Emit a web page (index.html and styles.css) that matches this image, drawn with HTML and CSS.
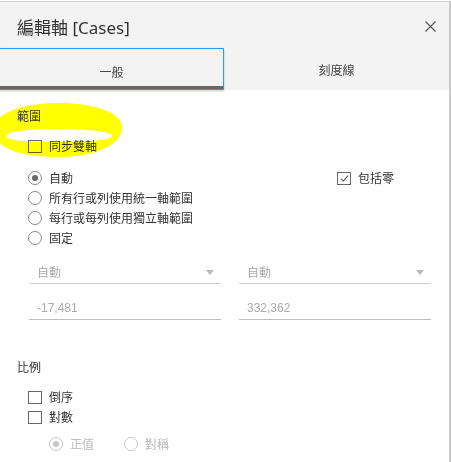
FILE: index.html
```html
<!DOCTYPE html>
<html lang="zh-Hant">
<head>
<meta charset="utf-8">
<title>編輯軸 [Cases]</title>
<link rel="stylesheet" href="styles.css">
</head>
<body>
<div class="dialog">
  <div class="header">
    <div class="titlebar">
      <span class="title">編輯軸 [Cases]</span>
      <svg class="close" width="11" height="11" viewBox="0 0 11 11"><path d="M0.5 0.5L10.5 10.5M10.5 0.5L0.5 10.5" stroke="#555" stroke-width="1.1" fill="none"/></svg>
    </div>
    <div class="tabs">
      <div class="tab active">一般</div>
      <div class="tab">刻度線</div>
    </div>
  </div>
  <div class="content">
    <div class="section-title">範圍</div>
    <label class="row sync"><span class="checkbox"></span><span>同步雙軸</span></label>
    <div class="range">
      <div class="radios">
        <label class="row"><span class="radio checked"></span><span>自動</span></label>
        <label class="row"><span class="radio"></span><span>所有行或列使用統一軸範圍</span></label>
        <label class="row"><span class="radio"></span><span>每行或每列使用獨立軸範圍</span></label>
        <label class="row"><span class="radio"></span><span>固定</span></label>
      </div>
      <label class="row"><span class="checkbox checked"><svg width="11" height="11" viewBox="0 0 11 11"><path d="M2 5.8L4.3 8.2L9 2.6" stroke="#666" stroke-width="1.2" fill="none"/></svg></span><span>包括零</span></label>
    </div>
    <div class="fields">
      <div class="field select"><span>自動</span><span class="arrow"></span></div>
      <div class="field select"><span>自動</span><span class="arrow"></span></div>
    </div>
    <div class="fields inputs">
      <div class="field num">-17,481</div>
      <div class="field num">332,362</div>
    </div>
    <div class="section-title scale">比例</div>
    <label class="row sub"><span class="checkbox"></span><span>倒序</span></label>
    <label class="row sub"><span class="checkbox"></span><span>對數</span></label>
    <div class="row disabled-radios">
      <label class="row"><span class="radio checked off"></span><span>正值</span></label>
      <label class="row"><span class="radio off"></span><span>對稱</span></label>
    </div>
  </div>
  <svg class="highlight" width="130" height="60" viewBox="0 100 130 60">
    <path fill="#ffff00" fill-rule="evenodd" d="M-6 130 C-6 112 25 103 58 103 C95 103 122 113 122 127 C122 145 95 157 58 157 C20 157 -6 148 -6 130 Z M6 136 C6 131 30 129 59 129 C90 129 112 132 112 136 C112 140 90 142 59 142 C30 142 6 141 6 136 Z"/>
  </svg>
</div>
</body>
</html>
```
FILE: styles.css
```css
html, body {
  margin: 0;
  padding: 0;
  background: #fff;
}
body {
  font-family: "Noto Sans", "Noto Sans CJK TC", sans-serif;
  font-size: 12px;
  color: #333;
}
.dialog {
  position: relative;
  margin-top: 1px;
  width: 449px;
  height: 460px;
  border-top: 1px solid #cfcfcf;
  border-right: 2px solid #c8c8c8;
  overflow: hidden;
}
.header {
  background: #f3f3f3;
}
.titlebar {
  box-sizing: border-box;
  height: 46px;
  padding: 2px 13px 0 17px;
  display: flex;
  align-items: center;
  justify-content: space-between;
}
.title {
  font-size: 17px;
  color: #333;
  font-family: "Noto Sans", "Noto Sans CJK TC", sans-serif;
}
.close {
  display: block;
}
.tabs {
  display: flex;
  height: 42px;
}
.tab {
  flex: 1;
  display: flex;
  align-items: center;
  justify-content: center;
  color: #444;
  font-size: 12px;
  padding-top: 2px;
  box-sizing: border-box;
}
.tab.active {
  flex: none;
  width: 225px;
  margin-left: -1px;
  border: 1px solid #3a96dd;
  box-shadow: inset 0 -3px 0 #676767, 0 1px 2px rgba(58, 150, 221, 0.45);
  padding-top: 5px;
}
.content {
  padding-left: 17px;
}
.section-title {
  margin-top: 19px;
  line-height: 16px;
  color: #333;
}
.row {
  display: flex;
  align-items: center;
  height: 20px;
}
.sync {
  margin-top: 11px;
  margin-left: 11px;
}
.checkbox {
  box-sizing: border-box;
  width: 14px;
  height: 13px;
  border: 1px solid #666;
  margin-right: 7px;
  display: flex;
  align-items: center;
  justify-content: center;
  background: transparent;
}
.radio {
  box-sizing: border-box;
  width: 14px;
  height: 14px;
  border: 1px solid #888;
  border-radius: 50%;
  margin-right: 7px;
  display: flex;
  align-items: center;
  justify-content: center;
}
.radio.checked::after {
  content: "";
  width: 6px;
  height: 6px;
  border-radius: 50%;
  background: #666;
}
.range {
  margin-top: 12px;
  margin-left: 11px;
  display: grid;
  grid-template-columns: 309px auto;
  align-items: start;
}
.fields {
  margin-top: 11px;
  margin-left: 12px;
  display: flex;
  gap: 18px;
}
.fields.inputs {
  margin-top: 11px;
}
.field {
  box-sizing: border-box;
  width: 192px;
  height: 25px;
  padding: 2px 7px 0 8px;
  display: flex;
  align-items: center;
  justify-content: space-between;
  color: #aaa;
  border-bottom: 1px solid #cfcfcf;
}
.field.num {
  font-family: "Liberation Sans", Arial, sans-serif;
  border-bottom-color: #bdbdbd;
}
.arrow {
  width: 0;
  height: 0;
  border-left: 4px solid transparent;
  border-right: 4px solid transparent;
  border-top: 5px solid #bbb;
}
.section-title.scale {
  margin-top: 40px;
}
.sub {
  margin-left: 11px;
}
.scale + .sub {
  margin-top: 11px;
}
.disabled-radios {
  margin-top: 7px;
  margin-left: 32px;
  gap: 0;
  color: #bbb;
}
.disabled-radios .row + .row {
  margin-left: 30px;
}
.radio.off {
  border-color: #c6c6c6;
}
.radio.off.checked::after {
  background: #c6c6c6;
}
.highlight {
  position: absolute;
  left: 0;
  top: 98px;
  mix-blend-mode: multiply;
  pointer-events: none;
}
```
